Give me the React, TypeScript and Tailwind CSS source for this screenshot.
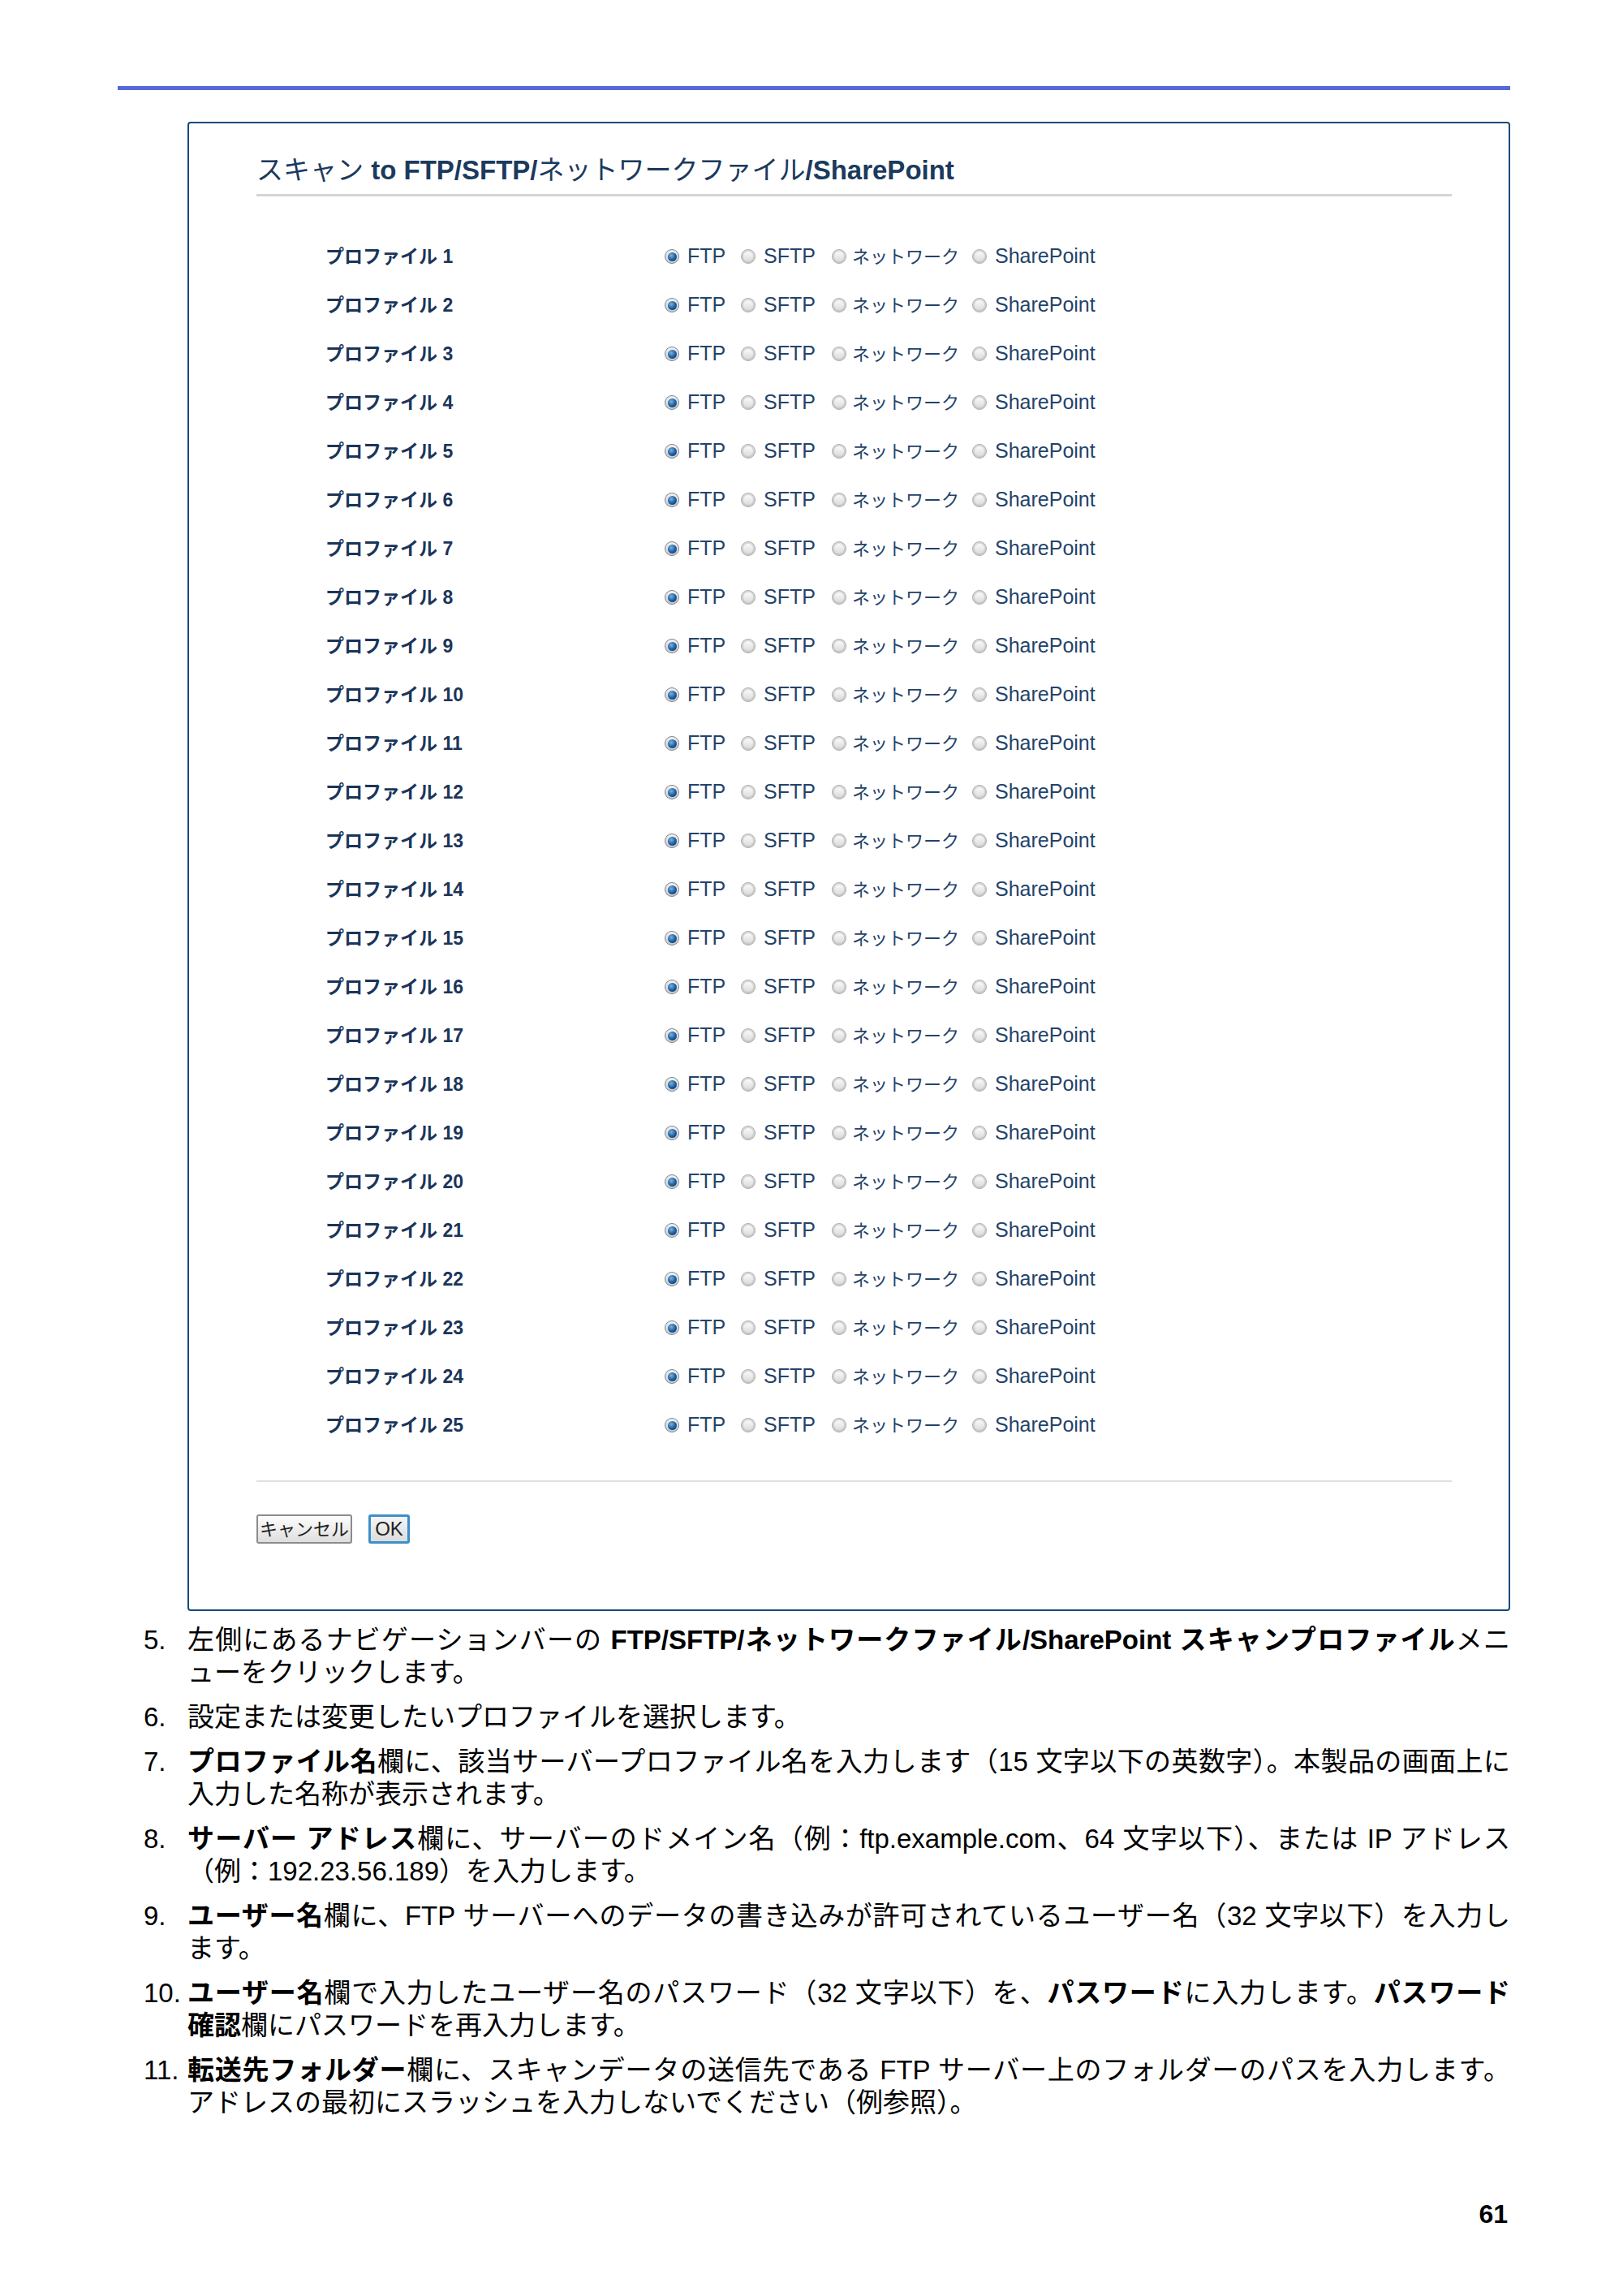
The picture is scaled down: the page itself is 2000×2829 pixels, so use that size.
import React from "react";

const FONT = '"Liberation Sans", "Noto Sans CJK JP", sans-serif';

function Radio({ checked }: { checked?: boolean }) {
  if (checked) {
    return (
      <span className="inline-flex h-[18px] w-[18px] shrink-0 items-center justify-center rounded-full border border-[#7a838e] bg-[linear-gradient(180deg,#f2f2f2,#c6cbd1)]">
        <span className="h-[11px] w-[11px] rounded-full bg-[radial-gradient(circle_at_38%_35%,#79b3e4,#1a5a98_55%,#0c3f72)]" />
      </span>
    );
  }
  return (
    <span className="inline-flex h-[18px] w-[18px] shrink-0 items-center justify-center rounded-full border border-[#aeaeae] bg-[linear-gradient(180deg,#dcdcdc,#c8c8c8)]">
      <span className="h-[12px] w-[12px] rounded-full bg-[linear-gradient(180deg,#fafafa,#dcdcdc)]" />
    </span>
  );
}

function Row({ n }: { n: number }) {
  return (
    <div className="flex h-[60px] items-center pl-[85px]">
      <div className="w-[418px] shrink-0 text-[23px] font-bold text-[#1b355a]">
        プロファイル {n}
      </div>
      <div className="flex items-center text-[25px] text-[#24436a]">
        <div className="flex w-[94px] items-center gap-[10px]">
          <Radio checked />
          <span>FTP</span>
        </div>
        <div className="flex w-[112px] items-center gap-[10px]">
          <Radio />
          <span>SFTP</span>
        </div>
        <div className="flex w-[173px] items-center gap-[7px]">
          <Radio />
          <span className="text-[22px]">ネットワーク</span>
        </div>
        <div className="flex items-center gap-[10px]">
          <Radio />
          <span>SharePoint</span>
        </div>
      </div>
    </div>
  );
}

function Line({ children, last }: { children: React.ReactNode; last?: boolean }) {
  return (
    <div className={last ? "text-left" : "text-justify [text-align-last:justify]"}>
      {children}
    </div>
  );
}

function Item({ num, lines }: { num: string; lines: React.ReactNode[] }) {
  return (
    <div className="flex">
      <div className="w-[54px] shrink-0">{num}</div>
      <div className="w-[1630px]">
        {lines.map((l, i) => (
          <Line key={i} last={i === lines.length - 1}>
            {l}
          </Line>
        ))}
      </div>
    </div>
  );
}

export default function App() {
  const rows = Array.from({ length: 25 }, (_, i) => i + 1);
  return (
    <div
      className="flex h-[2829px] w-[2000px] flex-col bg-white text-black"
      style={{ fontFamily: FONT }}
    >
      <div className="ml-[145px] mt-[106px] h-[5px] w-[1716px] bg-[#5669d6]" />

      <div className="ml-[231px] mt-[39px] w-[1630px] rounded-[4px] border-2 border-[#134a7b] pb-[81px] pl-[83px] pr-[70px] pt-[38px]">
        <div className="border-b-[3px] border-[#d4d4d4] pb-[9px] text-[33px] leading-[40px] text-[#1b3a5d]">
          <span>スキャン</span>
          <span className="font-bold"> to FTP/SFTP/</span>
          <span>ネットワークファイル</span>
          <span className="font-bold">/SharePoint</span>
        </div>

        <div className="mt-[44px]">
          {rows.map((n) => (
            <Row key={n} n={n} />
          ))}
        </div>

        <div className="mt-[38px] h-[2px] bg-[#e0e0e0]" />

        <div className="mt-[40px] flex items-center gap-[20px]">
          <button className="flex h-[36px] w-[118px] items-center justify-center rounded-[3px] border-2 border-[#8c8c8c] bg-[linear-gradient(180deg,#fdfdfd,#dedede)] text-[22px] text-[#222]">
            キャンセル
          </button>
          <button className="flex h-[36px] w-[51px] items-center justify-center rounded-[3px] border-[3px] border-[#3d8fca] bg-[linear-gradient(180deg,#f6f6f6,#dcdcdc)] text-[24px] text-[#222]">
            OK
          </button>
        </div>
      </div>

      <div className="ml-[177px] mt-[16px] flex w-[1684px] flex-col gap-[15px] text-[33px] leading-[40px]">
        <Item
          num="5."
          lines={[
            <>
              左側にあるナビゲーションバーの <b>FTP/SFTP/ネットワークファイル/SharePoint スキャンプロファイル</b>メニ
            </>,
            <>ューをクリックします。</>,
          ]}
        />
        <Item num="6." lines={[<>設定または変更したいプロファイルを選択します。</>]} />
        <Item
          num="7."
          lines={[
            <>
              <b>プロファイル名</b>欄に、該当サーバープロファイル名を入力します（15 文字以下の英数字）。本製品の画面上に
            </>,
            <>入力した名称が表示されます。</>,
          ]}
        />
        <Item
          num="8."
          lines={[
            <>
              <b>サーバー アドレス</b>欄に、サーバーのドメイン名（例：ftp.example.com、64 文字以下）、または IP アドレス
            </>,
            <>（例：192.23.56.189）を入力します。</>,
          ]}
        />
        <Item
          num="9."
          lines={[
            <>
              <b>ユーザー名</b>欄に、FTP サーバーへのデータの書き込みが許可されているユーザー名（32 文字以下）を入力し
            </>,
            <>ます。</>,
          ]}
        />
        <Item
          num="10."
          lines={[
            <>
              <b>ユーザー名</b>欄で入力したユーザー名のパスワード（32 文字以下）を、<b>パスワード</b>に入力します。<b>パスワード</b>
            </>,
            <>
              <b>確認</b>欄にパスワードを再入力します。
            </>,
          ]}
        />
        <Item
          num="11."
          lines={[
            <>
              <b>転送先フォルダー</b>欄に、スキャンデータの送信先である FTP サーバー上のフォルダーのパスを入力します。
            </>,
            <>アドレスの最初にスラッシュを入力しないでください（例参照）。</>,
          ]}
        />
      </div>

      <div className="ml-[1818px] mt-[97px] w-[40px] text-right text-[32px] font-bold leading-[40px]">
        61
      </div>
    </div>
  );
}
